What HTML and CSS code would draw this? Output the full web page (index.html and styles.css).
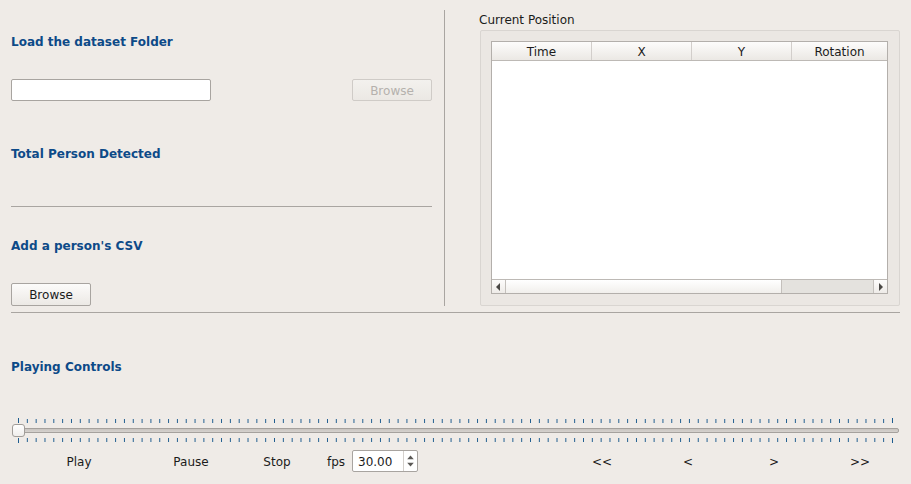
FILE: index.html
```html
<!DOCTYPE html>
<html>
<head>
<meta charset="utf-8">
<link rel="stylesheet" href="styles.css">
</head>
<body>
<div class="window">
  <div class="top">
    <div class="left">
      <div class="heading h-load">Load the dataset Folder</div>
      <div class="row-load">
        <div class="line-edit"></div>
        <div class="btn btn-disabled">Browse</div>
      </div>
      <div class="heading h-total">Total Person Detected</div>
      <div class="hsep hsep-left"></div>
      <div class="heading h-add">Add a person's CSV</div>
      <div class="btn btn-add">Browse</div>
    </div>
    <div class="vsep"></div>
    <div class="right">
      <div class="group-title">Current Position</div>
      <div class="groupbox">
        <div class="table">
          <div class="thead">
            <div class="th">Time</div>
            <div class="th">X</div>
            <div class="th">Y</div>
            <div class="th th-last">Rotation</div>
          </div>
          <div class="tbody"></div>
          <div class="hscroll">
            <div class="sb-btn sb-left"><svg width="5" height="8" viewBox="0 0 5 8"><path d="M4 0 L0 4 L4 8 Z" fill="#4a4845"/></svg></div>
            <div class="sb-track"></div>
            <div class="sb-handle"></div>
            <div class="sb-btn sb-right"><svg width="5" height="8" viewBox="0 0 5 8"><path d="M1 0 L5 4 L1 8 Z" fill="#4a4845"/></svg></div>
          </div>
        </div>
      </div>
    </div>
  </div>
  <div class="hsep hsep-full"></div>
  <div class="heading h-play">Playing Controls</div>
  <svg class="slider" width="911" height="26" viewBox="0 0 911 26">
    <defs>
      <pattern id="tk" x="18" y="0" width="8.828" height="26" patternUnits="userSpaceOnUse">
        <rect x="0" y="0" width="1" height="26" fill="#1f5d8f" shape-rendering="crispEdges"/>
      </pattern>
      <linearGradient id="hg" x1="0" y1="0" x2="0" y2="1">
        <stop offset="0" stop-color="#ffffff"/>
        <stop offset="1" stop-color="#efedeb"/>
      </linearGradient>
      <linearGradient id="gg" x1="0" y1="0" x2="0" y2="1">
        <stop offset="0" stop-color="#c6c2be"/>
        <stop offset="1" stop-color="#d8d4d0"/>
      </linearGradient>
    </defs>
    <g shape-rendering="crispEdges">
      <rect x="18" y="2" width="876" height="4" fill="url(#tk)"/>
      <rect x="18" y="21" width="876" height="4" fill="url(#tk)"/>
      <rect x="18" y="1" width="1" height="5" fill="#1f5d8f"/>
      <rect x="892" y="1" width="1" height="5" fill="#1f5d8f"/>
      <rect x="18" y="21" width="1" height="5" fill="#1f5d8f"/>
      <rect x="892" y="21" width="1" height="5" fill="#1f5d8f"/>
    </g>
    <rect x="18.5" y="11.5" width="880" height="4" rx="1.5" fill="url(#gg)" stroke="#a5a19d"/>
    <rect x="12.5" y="7.5" width="12" height="12" rx="2.5" fill="url(#hg)" stroke="#a19d99"/>
  </svg>
  <div class="controls">
    <div class="flat w-play">Play</div>
    <div class="flat w-pause">Pause</div>
    <div class="flat">Stop</div>
    <div class="fps">fps</div>
    <div class="spin">
      <div class="spin-text">30.00</div>
      <div class="spin-btns">
        <svg width="14" height="20" viewBox="0 0 14 20">
          <path d="M3.5 8 L7 4 L10.5 8 Z" fill="#5a5855"/>
          <path d="M3.5 12 L7 16 L10.5 12 Z" fill="#5a5855"/>
        </svg>
      </div>
    </div>
    <div class="spacer"></div>
    <div class="flat">&lt;&lt;</div>
    <div class="flat">&lt;</div>
    <div class="flat">&gt;</div>
    <div class="flat">&gt;&gt;</div>
  </div>
</div>
</body>
</html>
```

FILE: styles.css
```css
* { box-sizing: border-box; }
html, body {
  margin: 0;
  padding: 0;
  background: #efebe7;
}
body {
  font-family: "DejaVu Sans", "Liberation Sans", sans-serif;
  font-size: 12px;
  color: #1b1b1b;
}
.window {
  width: 911px;
  height: 484px;
  overflow: hidden;
  position: relative;
}
.top {
  display: flex;
  height: 312px;
}
.left {
  width: 432px;
  padding-left: 11px;
  display: flex;
  flex-direction: column;
}
.heading {
  font-weight: bold;
  color: #0d4a88;
  line-height: 18px;
  height: 16px;
}
.h-load { margin-top: 33px; }
.row-load {
  margin-top: 30px;
  display: flex;
  justify-content: space-between;
  height: 22px;
}
.line-edit {
  width: 200px;
  height: 22px;
  background: #fff;
  border: 1px solid #a8a4a0;
  border-radius: 2px;
}
.btn {
  width: 80px;
  height: 22px;
  border: 1px solid #a8a4a0;
  border-radius: 2px;
  background: linear-gradient(#fcfbfa, #ece9e5);
  text-align: center;
  line-height: 22px;
  color: #1b1b1b;
  overflow: hidden;
}
.btn-disabled {
  border-color: #cfcbc7;
  background: linear-gradient(#f3f1ee, #ebe8e4);
  color: #b5b1ad;
}
.h-total { margin-top: 44px; }
.hsep {
  height: 1px;
  background: #a9a5a1;
}
.hsep-left { margin-top: 45px; width: 421px; }
.h-add { margin-top: 30px; }
.btn-add { margin-top: 30px; height: 23px; line-height: 23px; }
.vsep {
  margin-left: 12px;
  margin-top: 10px;
  width: 1px;
  height: 296px;
  background: #a9a5a1;
}
.right {
  margin-left: 34px;
  width: 421px;
  display: flex;
  flex-direction: column;
}
.group-title {
  margin-top: 11px;
  line-height: 18px;
  height: 16px;
}
.groupbox {
  margin-top: 3px;
  margin-left: 1px;
  width: 420px;
  height: 276px;
  border: 1px solid #d9d5d1;
  border-radius: 2px;
  background: #ebe7e3;
  padding: 10px 11px 11px 10px;
}
.table {
  width: 397px;
  height: 253px;
  border: 1px solid #b3afab;
  background: #fff;
  display: flex;
  flex-direction: column;
}
.thead {
  display: flex;
  height: 19px;
  border-bottom: 1px solid #bdb9b5;
  background: linear-gradient(#fdfcfb, #ebe8e4);
}
.th {
  width: 100px;
  height: 18px;
  border-right: 1px solid #d2cecb;
  text-align: center;
  line-height: 20px;
}
.th-last {
  flex: 1;
  border-right: none;
}
.tbody {
  flex: 1;
  background: #fff;
}
.hscroll {
  height: 14px;
  border-top: 1px solid #bdb9b5;
  display: flex;
}
.sb-btn {
  width: 14px;
  display: flex;
  align-items: center;
  justify-content: center;
  background: linear-gradient(#fdfcfb, #eeebe8);
}
.sb-left { border-right: 1px solid #c4c0bc; }
.sb-right { border-left: 1px solid #c4c0bc; width: 14px; }
.sb-track {
  flex: 1;
  background: linear-gradient(#ffffff, #f1efec);
}
.sb-handle {
  width: 92px;
  border-left: 1px solid #c4c0bc;
  background: #e4e2de;
}
.hsep-full {
  margin-left: 11px;
  width: 889px;
}
.h-play { margin-top: 45px; margin-left: 11px; }
.slider {
  display: block;
  margin-top: 43px;
}
.controls {
  margin-top: 7px;
  height: 22px;
  display: flex;
  align-items: center;
  padding-left: 36px;
  padding-right: 8px;
}
.flat {
  width: 86px;
  height: 22px;
  text-align: center;
  line-height: 24px;
}
.w-pause { margin-left: 26px; }
.fps {
  margin-left: 7px;
  width: 18px;
  height: 22px;
  line-height: 24px;
}
.spin {
  margin-left: 7px;
  width: 66px;
  height: 22px;
  border: 1px solid #a8a4a0;
  border-radius: 2px;
  background: #fff;
  display: flex;
}
.spin-text {
  flex: 1;
  height: 20px;
  padding-left: 5px;
  line-height: 22px;
}
.spin-btns {
  width: 14px;
  border-left: 1px solid #d4d0cc;
  display: flex;
  align-items: center;
}
.spacer { flex: 1; }
```
